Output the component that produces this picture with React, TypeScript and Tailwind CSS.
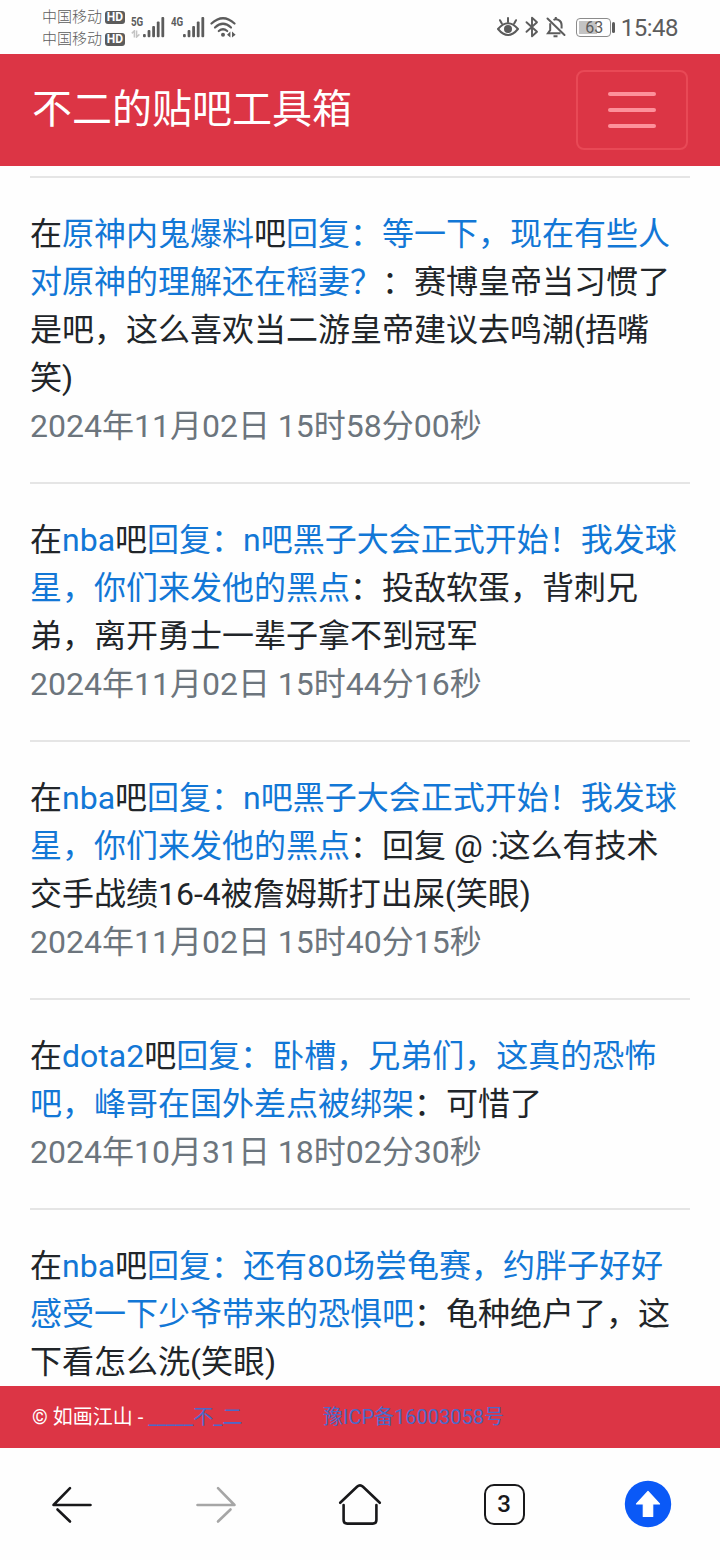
import { Fragment } from 'react';

type Reply = {
    forum: string;
    title: string;
    content: string;
    time?: string;
};

const replies: Reply[] = [
    {
        forum: '原神内鬼爆料',
        title: '等一下，现在有些人对原神的理解还在稻妻？',
        content: '赛博皇帝当习惯了是吧，这么喜欢当二游皇帝建议去鸣潮(捂嘴笑)',
        time: '2024年11月02日 15时58分00秒',
    },
    {
        forum: 'nba',
        title: 'n吧黑子大会正式开始！我发球星，你们来发他的黑点',
        content: '投敌软蛋，背刺兄弟，离开勇士一辈子拿不到冠军',
        time: '2024年11月02日 15时44分16秒',
    },
    {
        forum: 'nba',
        title: 'n吧黑子大会正式开始！我发球星，你们来发他的黑点',
        content: '回复 @ :这么有技术交手战绩16-4被詹姆斯打出屎(笑眼)',
        time: '2024年11月02日 15时40分15秒',
    },
    {
        forum: 'dota2',
        title: '卧槽，兄弟们，这真的恐怖吧，峰哥在国外差点被绑架',
        content: '可惜了',
        time: '2024年10月31日 18时02分30秒',
    },
    {
        forum: 'nba',
        title: '还有80场尝龟赛，约胖子好好感受一下少爷带来的恐惧吧',
        content: '龟种绝户了，这下看怎么洗(笑眼)',
    },
];

function Carrier() {
    return (
        <div className="flex h-[22px] items-center gap-[3px]">
            <span className="text-[15px] leading-[22px] font-light">中国移动</span>
            <span className="flex h-[13px] w-5 items-center justify-center rounded-[3px] bg-[#5c5c5c] text-[12px] leading-[13px] font-bold text-white">
                HD
            </span>
        </div>
    );
}

function Signal({ label, arrows }: { label: string; arrows?: boolean }) {
    return (
        <div className="flex h-[22px] w-[34px]">
            <div className="flex w-3 flex-col">
                <span className="origin-left scale-x-[0.75] text-[13px] leading-[12px] font-bold">{label}</span>
                {arrows && (
                    <svg className="mt-[2px] h-2 w-2.5" viewBox="0 0 10 8" fill="none" stroke="#c4c4c4" strokeWidth="1.5">
                        <path d="M0.8 3.4 L3.4 0.8 V7.4 M5.6 0.6 V7 L8.4 4.4" />
                    </svg>
                )}
            </div>
            <svg className="h-[22px] w-[22px]" viewBox="0 0 22 22" fill="#5c5c5c">
                <rect x="0" y="18" width="2.8" height="3.2" rx="1" />
                <rect x="4.6" y="14" width="2.8" height="7.2" rx="1" />
                <rect x="9.2" y="10" width="2.8" height="11.2" rx="1" />
                <rect x="13.8" y="5.5" width="2.8" height="15.7" rx="1" />
                <rect x="18.4" y="1" width="2.8" height="20.2" rx="1" />
            </svg>
        </div>
    );
}

function StatusBar() {
    return (
        <div className="flex h-[54px] shrink-0 items-start justify-between bg-[#fefefe] pr-[42px] pl-[42px] text-[#5c5c5c]">
            <div className="flex">
                <div className="w-[83px] pt-[6px]">
                    <Carrier />
                    <Carrier />
                </div>
                <div className="ml-[6px] flex gap-[6px] pt-4">
                    <Signal label="5G" arrows />
                    <Signal label="4G" />
                </div>
                <svg className="mt-4 ml-[5px] h-[22px] w-[26px]" viewBox="0 0 26 22" fill="none" stroke="#5c5c5c" strokeWidth="2.2" strokeLinecap="round">
                    <path d="M1.5 7.5 Q13 -3 24.5 7.5" />
                    <path d="M5 11.5 Q13 4 21 11.5" />
                    <path d="M8.8 15 Q13 11.5 17.2 15" />
                    <circle cx="13" cy="18.8" r="2" fill="#5c5c5c" stroke="none" />
                    <path d="M20.4 15.5 L17 18.7 L20.4 21.5 Z M22 15.5 L25.6 18.7 L22 21.5 Z" fill="#5c5c5c" stroke="none" />
                </svg>
            </div>
            <div className="flex h-[54px] items-center">
                {/* Eye comfort */}
                <svg className="h-[22px] w-6" viewBox="0 0 24 22" fill="none" stroke="#5c5c5c" strokeWidth="2" strokeLinecap="round">
                    <path d="M2 13 Q12 1.5 22 13 Q12 25 2 13 Z" strokeLinejoin="round" />
                    <circle cx="12" cy="13" r="4" fill="#5c5c5c" stroke="none" />
                    <path d="M12 2 V6 M4 4.2 L5.8 7.4 M20 4.2 L18.2 7.4" />
                </svg>
                {/* Bluetooth */}
                <svg className="ml-[5px] h-[22px] w-[14px]" viewBox="0 0 14 22" fill="none" stroke="#5c5c5c" strokeWidth="1.9" strokeLinejoin="round" strokeLinecap="round">
                    <path d="M1.5 6.2 L12 15.8 L7 20.3 V1.7 L12 6.2 L1.5 15.8" />
                </svg>
                {/* Muted bell */}
                <svg className="ml-[7px] h-[22px] w-5" viewBox="0 0 20 22" fill="none" stroke="#5c5c5c" strokeWidth="2">
                    <path d="M4.2 7.2 V14.2 L2 17.2 H14.5 M7.5 4 Q10 2.6 12.8 4.2 Q15.6 5.8 15.6 9 V12.5" />
                    <path d="M1.5 2.5 L18.5 19" strokeLinecap="round" />
                    <path d="M7.5 20.2 H11.5 M9.8 1 V3.5" />
                </svg>
                <div className="ml-[10px] flex h-[19px] w-[35px] rounded-[4px] border-[1.5px] border-[#8b8b8b] p-[2px]">
                    <div className="h-full w-[18px] bg-[#c3c3c3]">
                        <span className="block w-[31px] text-center font-[Roboto] text-[16px] leading-[14px]">63</span>
                    </div>
                </div>
                <div className="ml-[1px] h-[11px] w-[3px] rounded-sm bg-[#5c5c5c]" />
                <span className="ml-[6px] pt-[2px] font-[Roboto] text-[24px] leading-[24px] tracking-[-0.5px]">15:48</span>
            </div>
        </div>
    );
}

function Navbar() {
    return (
        <nav className="flex h-28 shrink-0 items-center justify-between bg-[#dc3545] px-8">
            <span className="text-[40px] leading-[60px] text-white">不二的贴吧工具箱</span>
            <button className="flex h-20 w-28 flex-col items-center justify-center gap-3 rounded-lg border-2 border-[#e84956]">
                <span className="h-1 w-12 rounded-sm bg-[#fd919b]" />
                <span className="h-1 w-12 rounded-sm bg-[#fd919b]" />
                <span className="h-1 w-12 rounded-sm bg-[#fd919b]" />
            </button>
        </nav>
    );
}

function ReplyItem({ reply }: { reply: Reply }) {
    return (
        <div className="text-[32px] leading-[48px] text-[#212529]">
            在<a className="text-[#1277d6]">{reply.forum}</a>吧<a className="text-[#1277d6]">回复：{reply.title}</a>
            ：{reply.content}
            {reply.time && <div className="text-[#6c757d]">{reply.time}</div>}
        </div>
    );
}

function Toolbar() {
    return (
        <div className="grid h-28 shrink-0 grid-cols-5 place-items-center bg-[#fefefe]">
            <svg className="h-12 w-12" viewBox="0 0 48 48" fill="none" stroke="#18181a" strokeWidth="2.6" strokeLinecap="round">
                <path d="M42.5 25 H5.5 L22 8.2 M9.5 29.5 L22 41.5" strokeLinejoin="round" />
            </svg>
            <svg className="h-12 w-12" viewBox="0 0 48 48" fill="none" stroke="#a6a6a6" strokeWidth="2.6" strokeLinecap="round">
                <path d="M5.5 25 H42.5 L26 8.2 M38.5 29.5 L26 41.5" strokeLinejoin="round" />
            </svg>
            <svg className="h-12 w-12" viewBox="0 0 48 48" fill="none" stroke="#18181a" strokeWidth="2.6" strokeLinecap="round">
                <path d="M4.2 22.8 L21 6.8 Q24 4 27 6.8 L43.8 22.8" />
                <path d="M7.6 25 V40 Q7.6 43.6 11.2 43.6 H36.8 Q40.4 43.6 40.4 40 V25" />
            </svg>
            <div className="flex h-[41px] w-[41px] items-center justify-center rounded-[10px] border-[2.5px] border-[#18181a] pb-px font-[Roboto] text-[24px] leading-none font-medium text-[#18181a]">
                3
            </div>
            <svg className="h-12 w-12" viewBox="0 0 48 48">
                <circle cx="24" cy="24" r="23.2" fill="#0a59f7" />
                <path
                    d="M24 11.5 L35.5 24 H28.7 V36.5 H19.3 V24 H12.5 Z"
                    fill="#fff"
                    stroke="#fff"
                    strokeWidth="1.2"
                    strokeLinejoin="round"
                />
            </svg>
        </div>
    );
}

export default function App() {
    return (
        <div className="flex h-[1560px] w-[720px] flex-col overflow-hidden bg-[#fefefe] font-[Roboto,'Noto_Sans_CJK_SC',sans-serif] [text-spacing-trim:space-all]" lang="zh-CN">
            <StatusBar />
            <Navbar />
            <main className="min-h-0 flex-1 overflow-hidden px-[30px] pt-[10px]">
                {replies.map((reply, i) => (
                    <Fragment key={i}>
                        <hr className={`mb-8 border-t-2 border-[#e5e5e5] ${i > 0 ? 'mt-8' : ''}`} />
                        <ReplyItem reply={reply} />
                    </Fragment>
                ))}
            </main>
            <footer className="flex h-[62px] shrink-0 items-center bg-[#dc3545] px-8 text-[20px] leading-[30px] whitespace-pre text-white">
                <span className="w-[291px]">
                    © 如画江山 - <a className="text-[#4c69c8]">_____不_二</a>
                </span>
                <a className="text-[#4c69c8]">豫ICP备16003058号</a>
            </footer>
            <Toolbar />
        </div>
    );
}
